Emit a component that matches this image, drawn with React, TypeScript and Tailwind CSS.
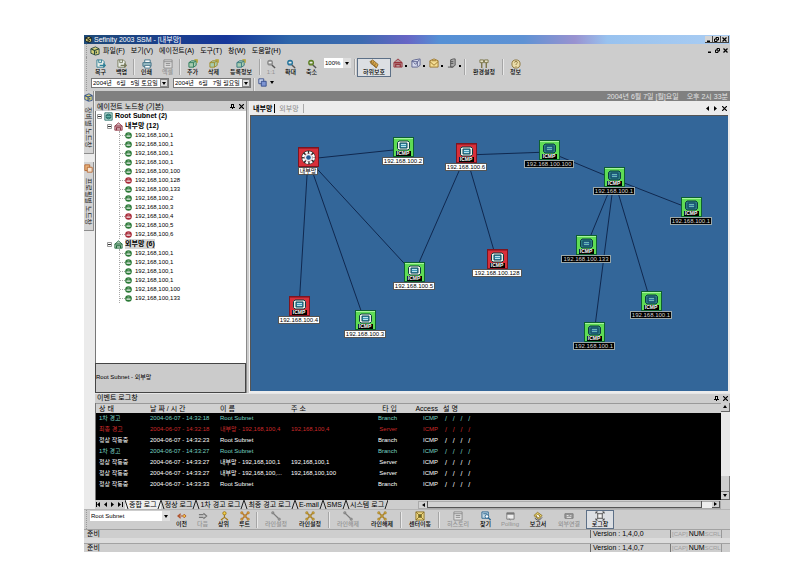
import { useState } from 'react';
import type { ReactNode } from 'react';

type Tool = { label: string; icon: string; width: string; color: string; off?: boolean; on?: boolean; sep?: boolean };

const MENU = ['파일(F)', '보기(V)', '에이전트(A)', '도구(T)', '창(W)', '도움말(H)'];

const FILE_TOOLS: Tool[] = [
  { label: '복구', icon: 'restore', width: 'w-[21px]', color: 'text-[#2f7f96]' },
  { label: '백업', icon: 'restore', width: 'w-[21px]', color: 'text-[#77795a]', sep: true },
  { label: '인쇄', icon: 'printer', width: 'w-[21px]', color: 'text-[#3f6f86]' },
  { label: '엑셀', icon: 'sheet', width: 'w-[21px]', color: 'text-[#8a8a8a]', off: true, sep: true },
  { label: '추가', icon: 'add', width: 'w-[21px]', color: 'text-[#2c7a5c]' },
  { label: '삭제', icon: 'add', width: 'w-[21px]', color: 'text-[#a08a24]' },
  { label: '등록정보', icon: 'add', width: 'w-[34px]', color: 'text-[#34777f]', sep: true },
  { label: '1:1', icon: 'zoom', width: 'w-[18px]', color: 'text-[#8a8a8a]', off: true },
  { label: '확대', icon: 'zoom', width: 'w-[21px]', color: 'text-[#23749c]' },
  { label: '축소', icon: 'zoom', width: 'w-[21px]', color: 'text-[#5c7f21]' },
];

const NAV_TOOLS: Tool[] = [
  { label: '이전', icon: 'prev', width: 'w-[21px]', color: 'text-[#b0552f]' },
  { label: '다음', icon: 'next', width: 'w-[21px]', color: 'text-[#777777]', off: true },
  { label: '상위', icon: 'up', width: 'w-[21px]', color: 'text-[#a37a1c]' },
  { label: '루트', icon: 'cross', width: 'w-[21px]', color: 'text-[#b5762a]', sep: true },
  { label: '라인설정', icon: 'line', width: 'w-[34px]', color: 'text-[#7a7a7a]', off: true },
  { label: '라인설정', icon: 'cross', width: 'w-[34px]', color: 'text-[#a8802a]', sep: true },
  { label: '라인해제', icon: 'line', width: 'w-[34px]', color: 'text-[#7a7a7a]', off: true },
  { label: '라인해제', icon: 'cross', width: 'w-[34px]', color: 'text-[#a8802a]', sep: true },
  { label: '센터이동', icon: 'center', width: 'w-[34px]', color: 'text-[#8c7328]', sep: true },
  { label: '히스토리', icon: 'sheet', width: 'w-[34px]', color: 'text-[#8a8a8a]', off: true },
  { label: '찾기', icon: 'find', width: 'w-[21px]', color: 'text-[#2c6690]' },
  { label: 'Polling', icon: 'window', width: 'w-[28px]', color: 'text-[#777777]', off: true },
  { label: '보고서', icon: 'report', width: 'w-[28px]', color: 'text-[#8c7328]' },
  { label: '외부연결', icon: 'link', width: 'w-[34px]', color: 'text-[#7a7a7a]', off: true },
  { label: '로그창', icon: 'log', width: 'w-[28px]', color: 'text-[#4a4a4a]', on: true },
];

const TREE = [
  {
    name: '내부망 (12)',
    alert: true,
    hosts: ['1', '1', '1', '1', '100', '128', '133', '2', '3', '4', '5', '6'],
    down: ['128', '4', '6'],
  },
  { name: '외부망 (6)', alert: false, hosts: ['1', '1', '1', '1', '100', '133'], down: [] as string[] },
];

const NODES = [
  { x: 57, y: 31, label: '내부망', red: true, dark: false, hub: true },
  { x: 152, y: 21, label: '192.168.100.2', red: false, dark: false },
  { x: 215, y: 27, label: '192.168.100.6', red: true, dark: false },
  { x: 298, y: 24, label: '192.168.100.100', red: false, dark: true },
  { x: 363, y: 51, label: '192.168.100.1', red: false, dark: true },
  { x: 440, y: 81, label: '192.168.100.1', red: false, dark: true },
  { x: 335, y: 119, label: '192.168.100.133', red: false, dark: true },
  { x: 246, y: 133, label: '192.168.100.128', red: true, dark: false },
  { x: 163, y: 146, label: '192.168.100.5', red: false, dark: false },
  { x: 400, y: 175, label: '192.168.100.1', red: false, dark: true },
  { x: 48, y: 180, label: '192.168.100.4', red: true, dark: false },
  { x: 114, y: 194, label: '192.168.100.3', red: false, dark: false },
  { x: 343, y: 206, label: '192.168.100.1', red: false, dark: true },
];

// pairs of indexes into NODES
const LINKS = [[0, 1], [0, 8], [0, 10], [0, 11], [2, 8], [2, 7], [2, 3], [3, 4], [4, 5], [4, 6], [4, 9], [4, 12]];

const LOGS = [
  { state: '1차 경고', time: '14:32:18', name: 'Root Subnet', addr: '', type: 'Branch', tone: 'text-[#78d2c2]' },
  { state: '최종 경고', time: '14:32:18', name: '내부망 - 192,168,100,4', addr: '192,168,100,4', type: 'Server', tone: 'text-[#cc2a2a]' },
  { state: '정상 작동중', time: '14:32:23', name: 'Root Subnet', addr: '', type: 'Branch', tone: 'text-white' },
  { state: '1차 경고', time: '14:33:27', name: 'Root Subnet', addr: '', type: 'Branch', tone: 'text-[#78d2c2]' },
  { state: '정상 작동중', time: '14:33:27', name: '내부망 - 192,168,100,1', addr: '192,168,100,1', type: 'Server', tone: 'text-white' },
  { state: '정상 작동중', time: '14:33:27', name: '내부망 - 192,168,100,...', addr: '192,168,100,100', type: 'Server', tone: 'text-white' },
  { state: '정상 작동중', time: '14:33:33', name: 'Root Subnet', addr: '', type: 'Branch', tone: 'text-white' },
];

const LOG_TABS = ['종합 로그', '정상 로그', '1차 경고 로그', '최종 경고 로그', 'E-mail', 'SMS', '시스템 로그'];

const GLYPHS: Record<string, ReactNode> = {
  restore: <><path d="M1 1h6l2 2v6H1z" fill="#e9efe9" /><path d="M3 1v3h3V1" /><path d="M4 7h6M8 5l2 2-2 2" strokeWidth="1.5" /></>,
  printer: <><path d="M3 1h6v3H3z" fill="#fff" /><path d="M1 4h9v4H1z" fill="#9fc0c8" /><path d="M3 7h6v3H3z" fill="#fff" /></>,
  sheet: <><path d="M1 1h9v9H1z" fill="#dedede" /><path d="M1 3h9M3 5h5M3 7h5" /></>,
  add: <><path d="M1 4l3-2h5v5l-3 2H1z" fill="#a8cdb0" /><path d="M1 4h5v5M6 4l3-2" /><path d="M7 1h3v3" stroke="#b3a12b" strokeWidth="1.5" /></>,
  zoom: <><circle cx="4.5" cy="4" r="2.5" fill="currentColor" fillOpacity="0.5" strokeWidth="1.5" /><path d="M6.5 6.5l3.5 3.5" stroke="#555" strokeWidth="1.5" /><path d="M3 4h3" stroke="#fff" /></>,
  prev: <><path d="M4 3L1 5.5l3 2.5M1 5.5h5" strokeWidth="1.3" /><path d="M8 3.5l2 2-2 2-2-2z" fill="#f0c83c" /></>,
  next: <><path d="M1 4h5M1 7h5M6 2.5l3.5 3L6 8.5" strokeWidth="1.3" /></>,
  up: <><circle cx="6" cy="2.5" r="1.8" fill="#f0d24a" /><path d="M6 4v3M3 9l3-2 3 2M2 9.5h2M8 9.5h2" strokeWidth="1.3" /></>,
  cross: <><path d="M2 2l7 7M9 2L2 9" strokeWidth="1.5" /><path d="M1 1h2v2H1zM8 1h2v2H8zM1 8h2v2H1zM8 8h2v2H8zM4.5 4.5h2v2h-2z" fill="#f0d24a" /></>,
  line: <><path d="M2 2l6 6" strokeWidth="1.3" /><path d="M1 1h2v2H1zM8 8h2v2H8z" fill="#bbb" /></>,
  center: <><path d="M1 1h9v9H1z" fill="#ecd883" /><path d="M1 1l9 9M10 1l-9 9" /><path d="M4 4h3v3H4z" fill="#5c6a3a" /></>,
  find: <><path d="M1 1h7v7H1z" fill="#c5dae6" /><path d="M2.5 3h4" /><circle cx="6.5" cy="6" r="2" fill="#fff" /><path d="M8 7.5l2.5 2.5" strokeWidth="1.5" /></>,
  window: <><path d="M2 2h8v7H2z" fill="#eee" /><path d="M2 3h8" strokeWidth="2" /><path d="M4 8l2 2" /></>,
  report: <><path d="M1 5l4-3.5L10 5 6 9z" fill="#f2df79" /><path d="M3 5.5l2-2 3 2-2 2z" fill="#fff" /><path d="M2 8l3 2h2l3-3" stroke="#444" /></>,
  link: <><path d="M1 3h9v5H1z" fill="#999" /><path d="M3 5h2M7 5h1M3 7h5" stroke="#eee" /></>,
  log: <><path d="M3 3h5v5H3z" fill="#f3f3f3" /><path d="M1 1l2 2M10 1L8 3M1 10l2-2M10 10L8 8M1 3V1h2M8 1h2v2M1 8v2h2M8 10h2V8" /></>,
  shield: <><path d="M1 3l3-2 6 5-2 4z" fill="#d8a648" /><path d="M3 2l-1 3 6 4M5 3l-1 3M7 5L6 8" /></>,
  house: <><path d="M1 5l4.5-4L10 5v5H1z" fill="currentColor" fillOpacity="0.35" /><path d="M1 5h9M3 10V7h5v3" strokeWidth="1.3" /></>,
  chart: <><path d="M1 3l3-1 6-1v7l-3 2H1z" fill="#d5d9ec" /><path d="M1 4h6v5M3 5l2 2 4-5" /></>,
  mail: <><path d="M1 3l4.5-2L10 3v7H1z" fill="#f3dd93" /><path d="M1 4l4.5 4L10 4M3 3h5" /></>,
  server: <><path d="M4 2l3-1h2v7l-3 2H4z" fill="#aaa" /><path d="M4 4h3M4 6h3M1 10h6" /></>,
  config: <><path d="M1 1h4v3H1zM6 1h4v3H6z" fill="#e5e1c8" /><path d="M3 4v6M8 4v6" strokeWidth="1.5" /></>,
  info: <><circle cx="5.5" cy="5.5" r="4.5" fill="#eadca9" /><path d="M4 4c0-2 3-2 3 0 0 1-1.5 1-1.5 2.5M5.5 8v1" /></>,
  app: <><path d="M1 3l5-2 4 2v6l-4 1-5-2z" fill="#d8d27a" /><path d="M1 3l4 2v5M5 5l5-2M7 6v2" strokeWidth="1.3" /></>,
  windows: <><path d="M1 1h6v6H1z" fill="#cdd8f0" /><path d="M4 4h6v6H4z" fill="#7d94d2" /></>,
  folder: <><path d="M1 1h6v7H1z" fill="#e8b27a" /><path d="M4 4h6v6H4z" fill="#f5e3cf" /></>,
  globe: <><path d="M1 1h9v9H1z" fill="#cfe9e4" /><circle cx="5.5" cy="5.5" r="3" fill="#63b2a6" /><path d="M2 4h7M2 7h7" /></>,
};

function Glyph({ name, className }: { name: string; className: string }) {
  return (
    <svg viewBox="0 0 11 11" className={className} fill="none" stroke="currentColor" strokeWidth="1" aria-hidden="true">
      {GLYPHS[name]}
    </svg>
  );
}

function Separator() {
  return <span className="mx-px h-4 w-[2px] shrink-0 border-l border-[#a5a5a5] bg-[#e8e8e8]" />;
}

function Grip() {
  return <span className="mx-[2px] h-full w-[2px] shrink-0 border-l border-dotted border-[#999]" />;
}

function ToolButton({ tool }: { tool: Tool }) {
  const frame = tool.on ? 'border-[#5d7087] bg-[#dcdfe3]' : 'border-transparent';
  return (
    <>
      <button
        type="button"
        disabled={tool.off}
        className={`flex h-[19px] shrink-0 flex-col items-center border ${frame} ${tool.width}`}
      >
        <Glyph name={tool.icon} className={`h-[10px] w-[10px] shrink-0 ${tool.color}`} />
        <span className={`text-[6px] leading-[7px] font-medium whitespace-nowrap ${tool.off ? 'text-[#939393]' : 'text-black'}`}>
          {tool.label}
        </span>
      </button>
      {tool.sep && <Separator />}
    </>
  );
}

function SelectBox({ label, options, width, boxed }: { label: string; options: string[]; width: string; boxed?: boolean }) {
  return (
    <div className={`flex h-[10px] shrink-0 items-center bg-white ${boxed ? 'border border-[#777]' : ''} ${width}`}>
      <select aria-label={label} className="h-full min-w-0 flex-1 appearance-none bg-transparent pl-px text-[6px] leading-[8px]">
        {options.map((o) => (
          <option key={o}>{o}</option>
        ))}
      </select>
      <span className={`flex h-full w-2 items-center justify-center bg-[#dedede] ${boxed ? 'border border-[#888]' : ''}`}>
        <svg viewBox="0 0 4 3" className="h-[3px] w-1"><path d="M0 0h4L2 3z" /></svg>
      </span>
    </div>
  );
}

function CloseButton() {
  return (
    <button type="button" aria-label="닫기">
      <svg viewBox="0 0 5 5" className="h-[5px] w-[5px]" stroke="#000" strokeWidth="1.2"><path d="M0 0l5 5M5 0L0 5" /></svg>
    </button>
  );
}

function PanelButtons() {
  return (
    <span className="flex gap-1">
      <button type="button" aria-label="고정">
        <svg viewBox="0 0 5 5" className="h-[5px] w-[5px]"><path d="M1 0h3v3h1v1H3v1H2V4H0V3h1z" /><path d="M2 1h1v2H2z" fill="#ddd" /></svg>
      </button>
      <CloseButton />
    </span>
  );
}

function WindowButtons({ raised }: { raised?: boolean }) {
  const frame = raised
    ? 'flex h-[7px] w-[8px] items-center justify-center border-r border-b border-[#444] bg-[#d4d4d4]'
    : 'flex h-[7px] w-[8px] items-center justify-center';
  return (
    <div className="flex shrink-0">
      <button type="button" aria-label="최소화" className={frame}>
        <svg viewBox="0 0 5 5" className="h-[5px] w-[5px]"><path d="M1 3.5h3V5H1z" /></svg>
      </button>
      <button type="button" aria-label="복원" className={frame}>
        <svg viewBox="0 0 5 5" className="h-[5px] w-[5px]" fill="none" stroke="#000"><path d="M2 2V.5h2.5V3H3M.5 2H3v2.5H.5z" /></svg>
      </button>
      <button type="button" aria-label="닫기" className={frame}>
        <svg viewBox="0 0 5 5" className="h-[5px] w-[5px]" stroke="#000" strokeWidth="1.2"><path d="M.5.5l4 4M4.5.5l-4 4" /></svg>
      </button>
    </div>
  );
}

function RailTab({ icon, label, color }: { icon: string; label: string; color: string }) {
  return (
    <button type="button" className="flex w-[10px] flex-col items-center gap-[5px] border-r border-b border-[#8d8d8d] bg-[#d4d4d4] pt-[2px] pb-[5px]">
      <Glyph name={icon} className={`h-[9px] w-[9px] ${color}`} />
      <span className="text-[7px] leading-[9px] whitespace-nowrap text-[#222] [text-orientation:sideways] [writing-mode:vertical-rl]">
        {label}
      </span>
    </button>
  );
}

function Toggle() {
  return (
    <svg viewBox="0 0 5 5" className="h-[5px] w-[5px] shrink-0" fill="#fff" stroke="#999">
      <path d="M.5.5h4v4h-4z" />
      <path d="M1 2.5h3" stroke="#333" />
    </svg>
  );
}

function TreePanel() {
  return (
    <aside className="flex w-[152px] shrink-0 flex-col border-r border-[#8a8a8a] bg-[#cdcdcd]">
      <div className="flex h-[10px] items-center justify-between px-[2px]">
        <h2 className="text-[7px] leading-[9px] whitespace-nowrap">에이전트 노드창 (기본)</h2>
        <PanelButtons />
      </div>
      <div className="flex-1 border-l border-[#777] bg-white pl-px text-[7px]">
        <div className="flex h-[10px] items-center gap-[2px]">
          <Toggle />
          <Glyph name="globe" className="h-[9px] w-[9px] text-[#1c6660]" />
          <span className="font-bold">Root Subnet (2)</span>
        </div>
        {TREE.map((group) => (
          <div key={group.name} className="ml-[10px]">
            <div className="flex h-[10px] items-center gap-[2px]">
              <Toggle />
              <Glyph name="house" className={`h-[9px] w-[9px] ${group.alert ? 'text-[#8c3242]' : 'text-[#1f6b38]'}`} />
              <span className={`font-bold ${group.alert ? '' : 'bg-[#d6d6d6]'}`}>{group.name}</span>
            </div>
            <ul className="ml-3 border-l border-dotted border-[#a8a8a8]">
              {group.hosts.map((host, i) => (
                <li key={i} className="flex h-[9px] items-center text-[6px] text-black">
                  <span className="w-[5px] border-t border-dotted border-[#a8a8a8]" />
                  <svg viewBox="0 0 7 7" className="mr-[3px] h-[7px] w-[7px]">
                    <circle cx="3.5" cy="3.5" r="3.3" className={group.down.includes(host) ? 'fill-[#a82a38]' : 'fill-[#2c7a38]'} />
                    <path d="M1.5 3.5h4v1.2h-4z" fill="#fff" />
                    <path d="M2.5 1.5h2v1h-2z" fill="#fff" fillOpacity="0.5" />
                  </svg>
                  192,168,100,{host}
                </li>
              ))}
            </ul>
          </div>
        ))}
      </div>
      <div className="flex h-[30px] shrink-0 items-center border border-[#444] bg-[#cbcbcb] text-[6px]">Root Subnet - 외부망</div>
    </aside>
  );
}

function NodeIcon({ red, hub, dark }: { red: boolean; hub?: boolean; dark: boolean }) {
  return (
    <div className={`relative h-[20px] w-[21px] border ${red ? 'border-[#7e1520] bg-[#d8303a]' : 'border-[#0d6130] bg-[#5fdc55]'}`}>
      <svg viewBox="0 0 19 18" className="h-[18px] w-[19px]">
        <path d="M0 .5h19" stroke={red ? '#a81f2b' : '#a5f49a'} />
        {hub ? (
          <>
            <circle cx="9.5" cy="9.5" r="5.5" fill="none" stroke="#2b2b2b" strokeWidth="3" />
            <circle cx="9.5" cy="9.5" r="5.2" fill="none" stroke="#fff" strokeWidth="2.4" strokeDasharray="2.7 1.4" />
            <circle cx="9.5" cy="9.5" r="3.8" fill="#e8eef4" />
            <circle cx="9.5" cy="9.5" r="2.3" fill="#235a94" />
          </>
        ) : (
          <>
            <path d="M5 3h9l1.5 1.5v6L14 12H5l-1.5-1.5v-6z" fill={dark ? '#2b7a83' : '#e9f0e8'} stroke="#0d3c40" />
            <path d="M6 5h7v5H6z" fill={dark ? '#2f6fa0' : '#3f97b6'} stroke="#124a5c" />
            <path d="M7 6.5h5M7 8.5h5" stroke={dark ? '#6cb9b4' : '#b9e4ee'} />
          </>
        )}
      </svg>
      {!hub && (
        <span className="absolute bottom-0 left-[2px] h-[5px] w-[15px] bg-black text-center text-[5px] leading-[5px] font-bold text-white">
          ICMP
        </span>
      )}
    </div>
  );
}

function NetworkMap() {
  return (
    <div className="relative flex-1 overflow-hidden border-t border-l border-[#555] bg-[#336699]">
      <svg className="absolute inset-0 h-full w-full" stroke="#10284f" strokeWidth="1">
        {LINKS.map(([a, b]) => (
          <line key={`${a}-${b}`} x1={NODES[a].x} y1={NODES[a].y + 12} x2={NODES[b].x} y2={NODES[b].y + 12} />
        ))}
      </svg>
      {NODES.map((node, i) => (
        <div key={i} className="absolute flex w-14 -translate-x-1/2 flex-col items-center" style={{ left: node.x, top: node.y }}>
          <NodeIcon red={node.red} hub={node.hub} dark={node.dark} />
          <span
            className={`border px-px text-[6px] leading-[6px] whitespace-nowrap ${
              node.dark ? 'border-[#9aa7a9] bg-black text-[#d4d4d4]' : 'border-[#555] bg-white text-black'
            }`}
          >
            {node.label}
          </span>
        </div>
      ))}
    </div>
  );
}

function MapPanel() {
  return (
    <section className="ml-[2px] flex min-w-0 flex-1 flex-col border-l border-[#f4f4f4] bg-[#ececec] pr-[2px] pb-[2px]">
      <div className="flex h-[14px] items-center justify-between pr-px pl-[3px]">
        <div className="flex text-[7px] leading-[9px]">
          <button type="button" className="border-r border-black pr-[2px] font-bold">내부망</button>
          <button type="button" className="border-r border-[#aaa] px-1 text-[#888]">외부망</button>
        </div>
        <div className="flex items-center gap-[5px]">
          <button type="button" aria-label="이전 탭"><svg viewBox="0 0 3 5" className="h-[5px] w-[3px]"><path d="M3 0v5L0 2.5z" /></svg></button>
          <button type="button" aria-label="다음 탭"><svg viewBox="0 0 3 5" className="h-[5px] w-[3px]"><path d="M0 0v5l3-2.5z" /></svg></button>
          <CloseButton />
        </div>
      </div>
      <NetworkMap />
    </section>
  );
}

function LogPanel() {
  const [tab, setTab] = useState(0);
  return (
    <section className="bg-[#cdcdcd]">
      <div className="flex h-[10px] items-center justify-between border-t border-[#e6e6e6] px-[2px]">
        <h2 className="text-[7px] leading-[8px]">이벤트 로그창</h2>
        <PanelButtons />
      </div>
      <div className="flex">
        <div className="min-w-0 flex-1 border-l border-[#777] bg-black pb-[10px]">
          <table className="w-full table-fixed border-collapse text-left text-[6px] leading-[11px] whitespace-nowrap">
            <thead>
              <tr className="h-[10px] border-t border-[#999] bg-[#d0d0d0] text-[7px] leading-[9px]">
                <th className="w-[51px] pl-[3px] font-normal">상 태</th>
                <th className="w-[71px] pl-[3px] font-normal">날 짜 / 시 간</th>
                <th className="w-[71px] pl-[2px] font-normal">이 름</th>
                <th className="w-[67px] pl-[2px] font-normal">주 소</th>
                <th className="w-[41px] text-right font-normal">타 입</th>
                <th className="w-[41px] text-right font-normal">Access</th>
                <th className="pl-[5px] font-normal">설 명</th>
              </tr>
            </thead>
            <tbody>
              {LOGS.map((log, i) => (
                <tr key={i} className={`h-[11px] ${log.tone}`}>
                  <td className="pl-[3px]">{log.state}</td>
                  <td className="pl-[3px]">2004-06-07 - {log.time}</td>
                  <td className="pl-[2px]">{log.name}</td>
                  <td className="pl-[2px]">{log.addr}</td>
                  <td className="text-right">{log.type}</td>
                  <td className="text-right">ICMP</td>
                  <td className="pl-[7px] text-[7px] whitespace-pre">{'/   /   /   /'}</td>
                </tr>
              ))}
            </tbody>
          </table>
        </div>
        <div className="flex w-[9px] flex-col justify-between bg-[#e9e9e9]">
          <button type="button" aria-label="위로" className="flex h-[9px] items-center justify-center border-r border-b border-[#666] bg-[#d0d0d0]">
            <svg viewBox="0 0 4 3" className="h-[3px] w-1"><path d="M0 3h4L2 0z" /></svg>
          </button>
          <div>
            <div className="h-4 border-r border-b border-[#777] bg-[#cdcdcd]" />
            <button type="button" aria-label="아래로" className="flex h-[8px] w-full items-center justify-center border-r border-b border-[#666] bg-[#d0d0d0]">
              <svg viewBox="0 0 4 3" className="h-[3px] w-1"><path d="M0 0h4L2 3z" /></svg>
            </button>
          </div>
        </div>
      </div>
      <div className="flex h-[9px] items-center pr-[9px]">
        <svg viewBox="0 0 28 5" className="mx-px h-[5px] w-7 shrink-0">
          <path d="M1 0v5H0V0zM4 0v5L1 2.5zM11 0v5L8 2.5zM15 0v5l3-2.5zM22 0v5l3-2.5zM26 0v5h1V0z" />
        </svg>
        <div className="flex shrink-0 text-[7px] leading-[9px]">
          {LOG_TABS.map((name, i) => (
            <button
              key={name}
              type="button"
              onClick={() => setTab(i)}
              className={`flex h-[9px] items-center whitespace-nowrap ${tab === i ? 'bg-[#efefef]' : ''}`}
            >
              <svg viewBox="0 0 4 9" className="h-[9px] w-1" stroke="#222" fill="none"><path d="M0 0l3 9" /></svg>
              {name}
              <svg viewBox="0 0 4 9" className="h-[9px] w-1" stroke="#222" fill="none"><path d="M4 0L1 9" /></svg>
            </button>
          ))}
        </div>
        <div className="ml-auto flex h-[8px] w-[303px] min-w-0 items-center border border-[#aaa] bg-[#d2d2d2]">
          <button type="button" aria-label="왼쪽" className="flex h-[7px] w-[9px] items-center justify-center border-r border-[#555]">
            <svg viewBox="0 0 3 4" className="h-1 w-[3px]"><path d="M3 0v4L0 2z" /></svg>
          </button>
          <span className="h-[7px] flex-1 border-r border-b border-[#555]" />
          <span className="h-full w-[10px] bg-[#eee]" />
          <button type="button" aria-label="오른쪽" className="flex h-[7px] w-[8px] items-center justify-center border-r border-b border-[#555]">
            <svg viewBox="0 0 3 4" className="h-1 w-[3px]"><path d="M0 0v4l3-2z" /></svg>
          </button>
        </div>
      </div>
    </section>
  );
}

function StatusBar({ version }: { version: string }) {
  return (
    <div className="flex h-[9px] items-center border-t border-[#a2a2a2] bg-[#cecece] pr-2 pl-[3px] text-[7px] leading-[8px]">
      <span className="flex-1">준비</span>
      <span className="w-20 border-l border-[#666] pl-[2px] whitespace-nowrap">Version : {version}</span>
      <span className="flex w-[52px] text-[6px] text-[#a0a0a0]">
        <span className="border-l border-[#777] px-px">[CAP]</span>
        <span className="text-[7px] text-black">NUM</span>
        <span className="border-r border-[#999]">SCRL</span>
      </span>
    </div>
  );
}

export default function App() {
  return (
    <div className="flex min-h-screen flex-col bg-white pt-[35px] pr-[82px] pb-[31px] pl-[84px] font-['Liberation_Sans','Noto_Sans_CJK_KR',sans-serif] text-black">
      <div className="flex flex-1 flex-col overflow-hidden bg-[#cdcdcd]">
        <header className="flex h-[9px] items-center justify-between bg-[linear-gradient(90deg,#1f4b78_0%,#17379a_22%,#2e66aa_32%,#3d6bb0_43%,#6765c5_50%,#5590d5_55%,#5e92d4_68%,#9992d0_76%,#98c2ef_81%,#aacdf3_100%)] px-px">
          <div className="flex items-center gap-[2px]">
            <Glyph name="app" className="h-[7px] w-[7px] text-black" />
            <h1 className="text-[7px] leading-[9px] whitespace-nowrap text-white">Sefinity 2003 SSM - [내부망]</h1>
          </div>
          <WindowButtons raised />
        </header>

        <nav className="flex h-[13px] shrink-0 items-center justify-between pr-px">
          <div className="flex h-full items-center text-[7px] leading-[10px]">
            <Grip />
            <Glyph name="app" className="h-[10px] w-[10px] text-[#27483a]" />
            <ul className="flex gap-[6px] pl-[3px]">
              {MENU.map((item) => (
                <li key={item}><button type="button" className="whitespace-nowrap">{item}</button></li>
              ))}
            </ul>
          </div>
          <WindowButtons />
        </nav>

        <div className="flex h-5 shrink-0 items-center">
          <Grip />
          {FILE_TOOLS.map((tool) => (
            <ToolButton key={tool.label} tool={tool} />
          ))}
          <div className="mx-[2px] self-start pt-px"><SelectBox label="배율" options={['100%']} width="w-[27px]" /></div>
          <Separator />
          <ToolButton tool={{ label: '하위보호', icon: 'shield', width: 'w-[34px]', color: 'text-[#8d6a2c]', on: true }} />
          {[
            ['house', 'text-[#97343c]', '경보'],
            ['chart', 'text-[#5d6390]', '차트'],
            ['mail', 'text-[#9a752b]', '메일'],
            ['server', 'text-[#555555]', '서버'],
          ].map(([icon, color, name]) => (
            <button key={icon} type="button" aria-label={name} className="flex w-[18px] shrink-0 items-end gap-[2px] self-start pt-px pl-[2px]">
              <Glyph name={icon} className={`h-[10px] w-[10px] ${color}`} />
              <span className="mb-px h-[2px] w-[2px] bg-black" />
            </button>
          ))}
          <Separator />
          <ToolButton tool={{ label: '환경설정', icon: 'config', width: 'w-[34px]', color: 'text-[#7b7548]', sep: true }} />
          <ToolButton tool={{ label: '정보', icon: 'info', width: 'w-[21px]', color: 'text-[#8a7338]' }} />
        </div>

        <div className="flex h-[14px] shrink-0 items-start gap-px pt-px">
          <Grip />
          <SelectBox label="시작일" options={['2004년\u00a0\u00a0\u00a06월\u00a0\u00a0\u00a05일 토요일']} width="w-[78px]" boxed />
          <span className="w-[2px]" />
          <SelectBox label="종료일" options={['2004년\u00a0\u00a0\u00a06월\u00a0\u00a0\u00a07일 월요일']} width="w-[78px]" boxed />
          <Separator />
          <button type="button" aria-label="창 배열" className="flex items-center gap-[3px] pl-px">
            <Glyph name="windows" className="h-[9px] w-[9px] text-[#2b4484]" />
            <svg viewBox="0 0 4 3" className="h-[3px] w-1"><path d="M0 0h4L2 3z" /></svg>
          </button>
        </div>

        <main className="flex flex-1">
          <div className="flex w-[11px] shrink-0 flex-col gap-2 bg-[#ebebeb]">
            <RailTab icon="app" label="장비별 노드창" color="text-[#27478a]" />
            <RailTab icon="folder" label="프로필별 노드창" color="text-[#b0602a]" />
          </div>
          <div className="flex min-w-0 flex-1 flex-col">
            <div className="flex h-[10px] items-center justify-end gap-2 bg-[#808080] pr-[2px] text-[7px] leading-[9px] text-[#e3e3e3]">
              <span>2004년 6월 7일 [월]요일</span>
              <span>오후 2시 33분</span>
            </div>
            <div className="flex flex-1">
              <TreePanel />
              <MapPanel />
            </div>
            <LogPanel />
          </div>
        </main>

        <div className="flex h-5 shrink-0 items-center border-t border-[#b5b5b5]">
          <Grip />
          <div className="mr-px self-start pt-px"><SelectBox label="서브넷" options={['Root Subnet']} width="w-[80px]" /></div>
          {NAV_TOOLS.map((tool, i) => (
            <ToolButton key={i} tool={tool} />
          ))}
        </div>
        <footer>
          <StatusBar version="1,4,0,0" />
          <div className="h-[5px] bg-[#dcdcdc]" />
          <StatusBar version="1,4,0,7" />
        </footer>
      </div>
    </div>
  );
}
